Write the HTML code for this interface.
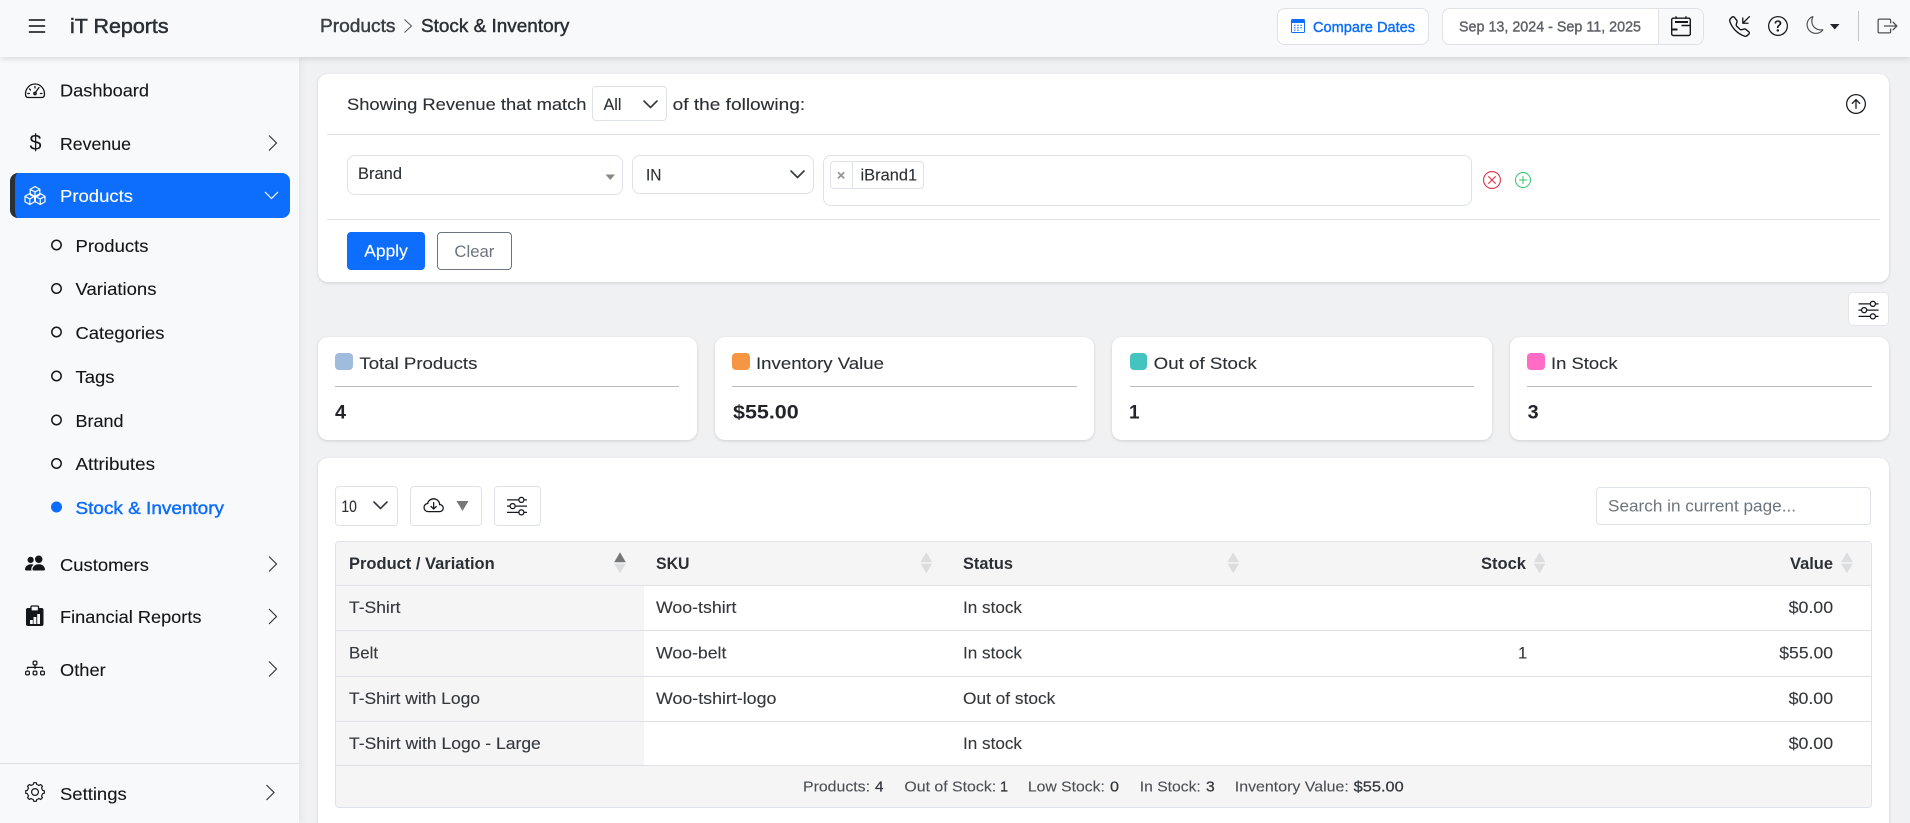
<!DOCTYPE html>
<html lang="en">
<head>
<meta charset="utf-8">
<title>iT Reports - Stock &amp; Inventory</title>
<style>
html,body{margin:0;padding:0;width:1910px;height:823px;overflow:hidden;background:#f0f1f3;font-family:"Liberation Sans",sans-serif}
#app{position:relative;width:1910px;height:823px;overflow:hidden;background:#f0f1f3}
.b{position:absolute;box-sizing:border-box}
.card{background:#fff;border-radius:10px;box-shadow:0 1px 3px rgba(0,0,0,.14)}
.ctl{background:#fff;border:1px solid #dee2e6;border-radius:4px}
.ctl8{background:#fff;border:1px solid #dee2e6;border-radius:8px}
.ln{background:#dee2e6;height:1px}
.ln2{background:#b9bbbe;height:1px}
.sq{border-radius:4px}
svg.o{position:absolute;left:0;top:0}
svg text{font-family:"Liberation Sans",sans-serif;font-size:16px;fill:#212529}
.s{font-size:17.5px;fill:#14171a;stroke:#14171a;stroke-width:.12}
.f{font-size:17px;fill:#2b3035;stroke:#2b3035;stroke-width:.12}
.td{font-size:16.5px;fill:#33383d;stroke:#33383d;stroke-width:.12}
.th{font-size:16.5px;font-weight:bold;fill:#2b3035}
.ft{font-size:14.5px;fill:#4a4f54;stroke:#4a4f54;stroke-width:.1}
.ftv{font-size:14.5px;fill:#33383d;stroke:#33383d;stroke-width:.25}
.val{font-size:19px;font-weight:bold;fill:#212529}
</style>
</head>
<body>
<div id="app">
<!-- layout backgrounds -->
<div class="b" style="left:0;top:57px;width:299px;height:766px;background:#f8f9fb;box-shadow:2px 0 6px rgba(0,0,0,.05)"></div>
<div class="b" style="left:0;top:0;width:1910px;height:57px;background:#f8f9fb;box-shadow:0 2px 6px rgba(0,0,0,.12)"></div>
<div class="b" style="left:0;top:763px;width:299px;height:1px;background:#dee2e6"></div>
<div class="b" style="left:10px;top:173px;width:280px;height:45px;background:#0d6efd;border-left:5px solid #2c3136;border-radius:8px"></div>

<!-- header controls -->
<div class="b ctl8" style="left:1277px;top:8px;width:152px;height:37px"></div>
<div class="b ctl8" style="left:1442px;top:8px;width:262px;height:37px"></div>
<div class="b" style="left:1658px;top:9px;width:45px;height:35px;background:#f8f9fb;border-left:1px solid #dee2e6;border-radius:0 7px 7px 0"></div>
<div class="b" style="left:1858px;top:11px;width:1px;height:30px;background:#c4c7ca"></div>

<!-- filter card -->
<div class="b card" style="left:318px;top:74px;width:1571px;height:208px"></div>
<div class="b ln" style="left:327px;top:134px;width:1553px"></div>
<div class="b ln" style="left:327px;top:219px;width:1553px"></div>
<div class="b ctl" style="left:592px;top:86px;width:75px;height:35px"></div>
<div class="b ctl8" style="left:347px;top:155px;width:276px;height:40px"></div>
<div class="b ctl8" style="left:632px;top:155px;width:182px;height:39px"></div>
<div class="b ctl8" style="left:823px;top:155px;width:649px;height:51px"></div>
<div class="b" style="left:830px;top:161px;width:94px;height:28px;background:#fff;border:1px solid #dee2e6;border-radius:4px"></div>
<div class="b" style="left:852px;top:162px;width:1px;height:26px;background:#dee2e6"></div>
<div class="b" style="left:347px;top:232px;width:78px;height:38px;background:#0d6efd;border-radius:4px"></div>
<div class="b" style="left:437px;top:232px;width:75px;height:38px;background:#fff;border:1px solid #6c757d;border-radius:4px"></div>

<!-- settings button -->
<div class="b" style="left:1848px;top:292px;width:41px;height:34px;background:#fff;border-radius:5px;border:1px solid #e4e6e9"></div>

<!-- summary cards -->
<div class="b card" style="left:318px;top:337px;width:379px;height:103px"></div>
<div class="b card" style="left:715px;top:337px;width:379px;height:103px"></div>
<div class="b card" style="left:1112px;top:337px;width:380px;height:103px"></div>
<div class="b card" style="left:1510px;top:337px;width:379px;height:103px"></div>
<div class="b sq" style="left:335px;top:353px;width:18px;height:17px;background:#a0bcdc"></div>
<div class="b sq" style="left:732px;top:353px;width:18px;height:17px;background:#f79642"></div>
<div class="b sq" style="left:1130px;top:353px;width:17px;height:17px;background:#45c3bf"></div>
<div class="b sq" style="left:1527px;top:353px;width:18px;height:17px;background:#ff6bc5"></div>
<div class="b ln2" style="left:335px;top:386px;width:344px"></div>
<div class="b ln2" style="left:732px;top:386px;width:345px"></div>
<div class="b ln2" style="left:1130px;top:386px;width:344px"></div>
<div class="b ln2" style="left:1527px;top:386px;width:345px"></div>

<!-- table card: runs past the bottom of the viewport, clipped by #app -->
<div class="b card" style="left:318px;top:458px;width:1571px;height:380px"></div>
<div class="b ctl" style="left:335px;top:486px;width:63px;height:40px"></div>
<div class="b ctl" style="left:410px;top:486px;width:72px;height:40px"></div>
<div class="b ctl" style="left:494px;top:486px;width:47px;height:40px"></div>
<div class="b ctl" style="left:1596px;top:487px;width:275px;height:38px"></div>

<div class="b" style="left:335px;top:541px;width:1537px;height:267px;border:1px solid #dee2e6;border-radius:4px;background:#fff;overflow:hidden">
  <div class="b" style="left:0;top:0;width:1535px;height:43px;background:#f5f5f6"></div>
  <div class="b" style="left:0;top:43px;width:308px;height:181px;background:#f5f5f6"></div>
  <div class="b" style="left:0;top:224px;width:1535px;height:41px;background:#f5f5f6"></div>
  <div class="b ln" style="left:0;top:43px;width:1535px"></div>
  <div class="b ln" style="left:0;top:88px;width:1535px"></div>
  <div class="b ln" style="left:0;top:134px;width:1535px"></div>
  <div class="b ln" style="left:0;top:179px;width:1535px"></div>
  <div class="b ln" style="left:0;top:223px;width:1535px"></div>
</div>

<svg class="o" width="1910" height="823" viewBox="0 0 1910 823" xmlns="http://www.w3.org/2000/svg">
  <!-- ===== header ===== -->
  <svg x="25" y="14" width="24" height="24" viewBox="0 0 16 16" fill="#212529" stroke="#212529" stroke-width=".12"><path d="M2.5 12a.5.5 0 0 1 .5-.5h10a.5.5 0 0 1 0 1H3a.5.5 0 0 1-.5-.5m0-4a.5.5 0 0 1 .5-.5h10a.5.5 0 0 1 0 1H3a.5.5 0 0 1-.5-.5m0-4a.5.5 0 0 1 .5-.5h10a.5.5 0 0 1 0 1H3a.5.5 0 0 1-.5-.5"/></svg>
  <text x="70" y="33" textLength="98.6" lengthAdjust="spacingAndGlyphs" style="font-size:20.5px;fill:#2b3035;stroke:#2b3035;stroke-width:.5">iT Reports</text>
  <text x="320" y="32" textLength="75.5" lengthAdjust="spacingAndGlyphs" style="font-size:18px;fill:#3a3f44;stroke:#3a3f44;stroke-width:.45">Products</text>
  <path d="M404.5 19.5 L411.5 26 L404.5 32.5" fill="none" stroke="#555" stroke-width="1"/>
  <text x="421" y="32" textLength="148.4" lengthAdjust="spacingAndGlyphs" style="font-size:18px;fill:#2b3035;stroke:#2b3035;stroke-width:.45">Stock &amp; Inventory</text>

  <!-- compare calendar icon -->
  <g fill="none" stroke="#0d6efd">
    <rect x="1291.5" y="19.5" width="13" height="13" rx="1" stroke-width="1"/>
    <path d="M1291 21.5h14" stroke-width="3"/>
    <path d="M1294 25.3h1.5M1297.2 25.3h1.5M1300.4 25.3h1.5M1294 27.8h1.5M1297.2 27.8h1.5M1300.4 27.8h1.5M1294 30.2h1.5M1297.2 30.2h1.5" stroke-width="1.2"/>
  </g>
  <text x="1313" y="32" textLength="102" lengthAdjust="spacingAndGlyphs" style="font-size:14.5px;fill:#0d6efd;stroke:#0d6efd;stroke-width:.4">Compare Dates</text>
  <text x="1459" y="31.5" textLength="182" lengthAdjust="spacingAndGlyphs" style="font-size:14.5px;fill:#5f6368;stroke:#5f6368;stroke-width:.4">Sep 13, 2024 - Sep 11, 2025</text>

  <!-- date calendar icon -->
  <g fill="none" stroke="#16191c">
    <rect x="1671.7" y="18.2" width="18.6" height="17.3" rx="1.5" stroke-width="1.4"/>
    <path d="M1676 16.2v2.5M1686 16.2v2.5" stroke-width="1.4"/>
    <path d="M1675 22h13" stroke-width="2"/>
    <path d="M1681.5 25.5h9" stroke-width="1.5"/>
    <path d="M1672 29.5h5.5" stroke-width="2"/>
  </g>

  <!-- phone -->
  <svg x="1729" y="16" width="21" height="21" viewBox="0 0 16 16" fill="#16191c"><path d="M15.854.146a.5.5 0 0 1 0 .708L11.707 5H14.5a.5.5 0 0 1 0 1h-4a.5.5 0 0 1-.5-.5v-4a.5.5 0 0 1 1 0v2.793L15.146.146a.5.5 0 0 1 .708 0m-12.2 1.182a.68.68 0 0 0-1.015-.063L1.605 2.3c-.483.484-.661 1.169-.45 1.77a17.6 17.6 0 0 0 4.168 6.608 17.6 17.6 0 0 0 6.608 4.168c.601.211 1.286.033 1.77-.45l1.034-1.034a.68.68 0 0 0-.063-1.015l-2.307-1.794a.68.68 0 0 0-.58-.122l-2.19.547a1.75 1.75 0 0 1-1.657-.459L5.482 8.062a1.75 1.75 0 0 1-.46-1.657l.548-2.19a.68.68 0 0 0-.122-.58zM1.884.511a1.745 1.745 0 0 1 2.612.163L6.29 2.98c.329.423.445.974.315 1.494l-.547 2.19a.68.68 0 0 0 .178.643l2.457 2.457a.68.68 0 0 0 .644.178l2.189-.547a1.75 1.75 0 0 1 1.494.315l2.306 1.794c.829.645.905 1.87.163 2.611l-1.034 1.034c-.74.74-1.846 1.065-2.877.702a18.6 18.6 0 0 1-7.01-4.42 18.6 18.6 0 0 1-4.42-7.009c-.362-1.03-.037-2.137.703-2.877z"/></svg>
  <!-- help -->
  <svg x="1768" y="16" width="20" height="20" viewBox="0 0 16 16" fill="#16191c"><path d="M8 15A7 7 0 1 1 8 1a7 7 0 0 1 0 14m0 1A8 8 0 1 0 8 0a8 8 0 0 0 0 16"/><path d="M5.255 5.786a.237.237 0 0 0 .241.247h.825c.138 0 .248-.113.266-.25.09-.656.54-1.134 1.342-1.134.686 0 1.314.343 1.314 1.168 0 .635-.374.927-.965 1.371-.673.489-1.206 1.06-1.168 1.987l.003.217a.25.25 0 0 0 .25.246h.811a.25.25 0 0 0 .25-.25v-.105c0-.718.273-.927 1.01-1.486.609-.463 1.244-.977 1.244-2.056 0-1.511-1.276-2.241-2.673-2.241-1.267 0-2.655.59-2.75 2.286m1.557 5.763c0 .533.425.927 1.01.927.609 0 1.028-.394 1.028-.927 0-.552-.42-.94-1.029-.94-.584 0-1.009.388-1.009.94"/></svg>
  <!-- moon -->
  <svg x="1806.5" y="16" width="18" height="18" viewBox="0 0 16 16" fill="#4a4f54"><path d="M6 .278a.77.77 0 0 1 .08.858 7.2 7.2 0 0 0-.878 3.46c0 4.021 3.278 7.277 7.318 7.277q.792-.001 1.533-.16a.79.79 0 0 1 .81.316.73.73 0 0 1-.031.893A8.35 8.35 0 0 1 8.344 16C3.734 16 0 12.286 0 7.71 0 4.266 2.114 1.312 5.124.06A.75.75 0 0 1 6 .278M4.858 1.311A7.27 7.27 0 0 0 1.025 7.71c0 4.02 3.279 7.276 7.319 7.276a7.32 7.32 0 0 0 5.205-2.162q-.506.063-1.029.063c-4.61 0-8.343-3.714-8.343-8.29 0-1.167.242-2.278.681-3.286"/></svg>
  <path d="M1830 24h9.5l-4.75 5.5z" fill="#212529"/>
  <!-- logout -->
  <svg x="1877.5" y="16" width="20" height="20" viewBox="0 0 16 16" fill="#4a4f54"><path d="M10 12.5a.5.5 0 0 1-.5.5h-8a.5.5 0 0 1-.5-.5v-9a.5.5 0 0 1 .5-.5h8a.5.5 0 0 1 .5.5v2a.5.5 0 0 0 1 0v-2A1.5 1.5 0 0 0 9.5 2h-8A1.5 1.5 0 0 0 0 3.5v9A1.5 1.5 0 0 0 1.5 14h8a1.5 1.5 0 0 0 1.5-1.5v-2a.5.5 0 0 0-1 0z"/><path d="M15.854 8.354a.5.5 0 0 0 0-.708l-3-3a.5.5 0 0 0-.708.708L14.293 7.5H5.5a.5.5 0 0 0 0 1h8.793l-2.147 2.146a.5.5 0 0 0 .708.708z"/></svg>

  <!-- ===== sidebar ===== -->
  <!-- speedometer -->
  <g fill="none" stroke="#14171a" stroke-width="1.3" stroke-linecap="round">
    <path d="M28 97.5 H42 Q44.5 97.5 44.5 94 A 9.5 10 0 0 0 25.5 94 Q25.5 97.5 28 97.5Z"/>
    <path d="M35 93 L39 87.5"/>
    <path d="M35 86.5v1.5M29.5 89l1 1M27.8 93.5h1.5M40.5 93.5h1.5"/>
    <circle cx="35" cy="93.5" r="1.2"/>
  </g>
  <text x="60" y="96.5" textLength="89" lengthAdjust="spacingAndGlyphs" class="s">Dashboard</text>

  <text x="29.5" y="150" textLength="12" lengthAdjust="spacingAndGlyphs" style="font-size:22px;fill:#14171a">$</text>
  <text x="60" y="150" textLength="71" lengthAdjust="spacingAndGlyphs" class="s">Revenue</text>
  <path d="M269 135.5 L276.5 143 L269 150.5" fill="none" stroke="#33383d" stroke-width="1.2"/>

  <g fill="none" stroke="#fff" stroke-width="1.2" stroke-linejoin="round">
    <path d="M35 186.5 L39.8 189.25 V194.75 L35 197.5 L30.2 194.75 V189.25Z M30.2 189.25 L35 192 L39.8 189.25 M35 192V197.5"/>
    <path d="M29.8 193.5 L34.6 196.25 V201.75 L29.8 204.5 L25 201.75 V196.25 Z M25 196.25 L29.8 199 L34.6 196.25 M29.8 199V204.5"/>
    <path d="M40.2 193.5 L45 196.25 V201.75 L40.2 204.5 L35.4 201.75 V196.25 Z M35.4 196.25 L40.2 199 L45 196.25 M40.2 199 V204.5"/>
  </g>
  <text x="60" y="202" textLength="73" lengthAdjust="spacingAndGlyphs" class="s" style="fill:#fff;stroke:#fff">Products</text>
  <path d="M265 192 L271.5 198.5 L278 192" fill="none" stroke="#fff" stroke-width="1.2"/>

  <g fill="none" stroke="#14171a" stroke-width="1.5">
    <circle cx="56.5" cy="245" r="4.7"/>
    <circle cx="56.5" cy="288.5" r="4.7"/>
    <circle cx="56.5" cy="332" r="4.7"/>
    <circle cx="56.5" cy="376" r="4.7"/>
    <circle cx="56.5" cy="420" r="4.7"/>
    <circle cx="56.5" cy="463.5" r="4.7"/>
  </g>
  <circle cx="56.5" cy="507" r="5.5" fill="#0d6efd"/>
  <text x="75.5" y="252" textLength="73" lengthAdjust="spacingAndGlyphs" class="s">Products</text>
  <text x="75.5" y="295" textLength="81" lengthAdjust="spacingAndGlyphs" class="s">Variations</text>
  <text x="75.5" y="339" textLength="89" lengthAdjust="spacingAndGlyphs" class="s">Categories</text>
  <text x="75.5" y="383" textLength="39" lengthAdjust="spacingAndGlyphs" class="s">Tags</text>
  <text x="75.5" y="427" textLength="48" lengthAdjust="spacingAndGlyphs" class="s">Brand</text>
  <text x="75.5" y="470" textLength="79.5" lengthAdjust="spacingAndGlyphs" class="s">Attributes</text>
  <text x="75.5" y="514" textLength="148.5" lengthAdjust="spacingAndGlyphs" class="s" style="fill:#0d6efd;stroke:#0d6efd;stroke-width:.45">Stock &amp; Inventory</text>

  <svg x="25" y="553" width="20" height="20" viewBox="0 0 16 16" fill="#14171a"><path d="M7 14s-1 0-1-1 1-4 5-4 5 3 5 4-1 1-1 1zm4-6a3 3 0 1 0 0-6 3 3 0 0 0 0 6m-5.784 6A2.24 2.24 0 0 1 5 13c0-1.355.68-2.75 1.936-3.72A6.3 6.3 0 0 0 5 9c-4 0-5 3-5 4s1 1 1 1zM4.5 8a2.5 2.5 0 1 0 0-5 2.5 2.5 0 0 0 0 5"/></svg>
  <text x="60" y="571" textLength="89" lengthAdjust="spacingAndGlyphs" class="s">Customers</text>
  <path d="M269 556.5 L276.5 564 L269 571.5" fill="none" stroke="#33383d" stroke-width="1.2"/>

  <rect x="26" y="608" width="17.5" height="18" rx="2" fill="#14171a"/>
  <rect x="31" y="606" width="7.5" height="5" rx="1" fill="#f8f9fb" stroke="#14171a" stroke-width="1.3"/>
  <path d="M30 620h2.8v4H30zM33.5 617h2.8v7h-2.8zM37.2 614H40v10h-2.8z" fill="#f8f9fb"/>
  <text x="60" y="623" textLength="141.5" lengthAdjust="spacingAndGlyphs" class="s">Financial Reports</text>
  <path d="M269 609 L276.5 616.5 L269 624" fill="none" stroke="#33383d" stroke-width="1.2"/>

  <svg x="25" y="658" width="20" height="20" viewBox="0 0 16 16" fill="#14171a"><path fill-rule="evenodd" d="M6 3.5A1.5 1.5 0 0 1 7.5 2h1A1.5 1.5 0 0 1 10 3.5v1A1.5 1.5 0 0 1 8.5 6v1H14a.5.5 0 0 1 .5.5v1a.5.5 0 0 1-1 0V8h-5v.5a.5.5 0 0 1-1 0V8h-5v.5a.5.5 0 0 1-1 0v-1A.5.5 0 0 1 2 7h5.5V6A1.5 1.5 0 0 1 6 4.5zM8.5 5a.5.5 0 0 0 .5-.5v-1a.5.5 0 0 0-.5-.5h-1a.5.5 0 0 0-.5.5v1a.5.5 0 0 0 .5.5zM0 11.5A1.5 1.5 0 0 1 1.5 10h1A1.5 1.5 0 0 1 4 11.5v1A1.5 1.5 0 0 1 2.5 14h-1A1.5 1.5 0 0 1 0 12.5zm1.5-.5a.5.5 0 0 0-.5.5v1a.5.5 0 0 0 .5.5h1a.5.5 0 0 0 .5-.5v-1a.5.5 0 0 0-.5-.5zm4.5.5A1.5 1.5 0 0 1 7.5 10h1a1.5 1.5 0 0 1 1.5 1.5v1A1.5 1.5 0 0 1 8.5 14h-1A1.5 1.5 0 0 1 6 12.5zm1.5-.5a.5.5 0 0 0-.5.5v1a.5.5 0 0 0 .5.5h1a.5.5 0 0 0 .5-.5v-1a.5.5 0 0 0-.5-.5zm4.5.5a1.5 1.5 0 0 1 1.5-1.5h1a1.5 1.5 0 0 1 1.5 1.5v1a1.5 1.5 0 0 1-1.5 1.5h-1a1.5 1.5 0 0 1-1.5-1.5zm1.5-.5a.5.5 0 0 0-.5.5v1a.5.5 0 0 0 .5.5h1a.5.5 0 0 0 .5-.5v-1a.5.5 0 0 0-.5-.5z"/></svg>
  <text x="60" y="676" textLength="45.7" lengthAdjust="spacingAndGlyphs" class="s">Other</text>
  <path d="M269 661.5 L276.5 669 L269 676.5" fill="none" stroke="#33383d" stroke-width="1.2"/>

  <!-- gear -->
  <g transform="translate(35 792)" fill="none" stroke="#14171a" stroke-width="1.2" stroke-linejoin="round">
    <circle r="3.4"/>
    <path d="M-2.9 -7 L-1.7 -7.6 L-1.3 -9.3 H1.3 L1.7 -7.6 L2.9 -7"/>
    <path d="M-2.9 -7 L-1.7 -7.6 L-1.3 -9.3 H1.3 L1.7 -7.6 L2.9 -7" transform="rotate(45)"/>
    <path d="M-2.9 -7 L-1.7 -7.6 L-1.3 -9.3 H1.3 L1.7 -7.6 L2.9 -7" transform="rotate(90)"/>
    <path d="M-2.9 -7 L-1.7 -7.6 L-1.3 -9.3 H1.3 L1.7 -7.6 L2.9 -7" transform="rotate(135)"/>
    <path d="M-2.9 -7 L-1.7 -7.6 L-1.3 -9.3 H1.3 L1.7 -7.6 L2.9 -7" transform="rotate(180)"/>
    <path d="M-2.9 -7 L-1.7 -7.6 L-1.3 -9.3 H1.3 L1.7 -7.6 L2.9 -7" transform="rotate(225)"/>
    <path d="M-2.9 -7 L-1.7 -7.6 L-1.3 -9.3 H1.3 L1.7 -7.6 L2.9 -7" transform="rotate(270)"/>
    <path d="M-2.9 -7 L-1.7 -7.6 L-1.3 -9.3 H1.3 L1.7 -7.6 L2.9 -7" transform="rotate(315)"/>
  </g>
  <text x="60" y="800" textLength="66.7" lengthAdjust="spacingAndGlyphs" class="s">Settings</text>
  <path d="M266.5 785 L274 792.5 L266.5 800" fill="none" stroke="#33383d" stroke-width="1.2"/>

  <!-- ===== filter card ===== -->
  <text x="347" y="110" textLength="239.5" lengthAdjust="spacingAndGlyphs" class="f">Showing Revenue that match</text>
  <text x="603.5" y="110" textLength="18" lengthAdjust="spacingAndGlyphs" class="f">All</text>
  <path d="M644 101 L650.5 107.5 L657 101" fill="none" stroke="#343a40" stroke-width="1.6" stroke-linecap="round" stroke-linejoin="round"/>
  <text x="672.7" y="110" textLength="132.5" lengthAdjust="spacingAndGlyphs" class="f">of the following:</text>
  <svg x="1846" y="94" width="20" height="20" viewBox="0 0 16 16" fill="#16191c"><path d="M1 8a7 7 0 1 0 14 0A7 7 0 0 0 1 8m15 0A8 8 0 1 1 0 8a8 8 0 0 1 16 0m-7.5 3.5a.5.5 0 0 1-1 0V5.707L5.354 7.854a.5.5 0 1 1-.708-.708l3-3a.5.5 0 0 1 .708 0l3 3a.5.5 0 0 1-.708.708L8.5 5.707z"/></svg>

  <text x="358" y="179" textLength="44" lengthAdjust="spacingAndGlyphs" class="f">Brand</text>
  <path d="M605.5 174.5h9.5l-4.75 5.5z" fill="#888"/>
  <text x="646" y="180.5" textLength="15.5" lengthAdjust="spacingAndGlyphs" class="f">IN</text>
  <path d="M791 171 L797.5 177.5 L804 171" fill="none" stroke="#343a40" stroke-width="1.6" stroke-linecap="round" stroke-linejoin="round"/>
  <path d="M838 172.2l6.2 6.2M844.2 172.2l-6.2 6.2" stroke="#909498" stroke-width="1.7" fill="none"/>
  <text x="860.5" y="180.5" textLength="56.6" lengthAdjust="spacingAndGlyphs" class="f">iBrand1</text>
  <svg x="1483" y="171" width="18" height="18" viewBox="0 0 16 16" fill="#dc3545"><path d="M8 15A7 7 0 1 1 8 1a7 7 0 0 1 0 14m0 1A8 8 0 1 0 8 0a8 8 0 0 0 0 16"/><path d="M4.646 4.646a.5.5 0 0 1 .708 0L8 7.293l2.646-2.647a.5.5 0 0 1 .708.708L8.707 8l2.647 2.646a.5.5 0 0 1-.708.708L8 8.707l-2.646 2.647a.5.5 0 0 1-.708-.708L7.293 8 4.646 5.354a.5.5 0 0 1 0-.708"/></svg>
  <svg x="1515" y="172" width="16" height="16" viewBox="0 0 16 16" fill="#2fc46a"><path d="M8 15A7 7 0 1 1 8 1a7 7 0 0 1 0 14m0 1A8 8 0 1 0 8 0a8 8 0 0 0 0 16"/><path d="M8 4a.5.5 0 0 1 .5.5v3h3a.5.5 0 0 1 0 1h-3v3a.5.5 0 0 1-1 0v-3h-3a.5.5 0 0 1 0-1h3v-3A.5.5 0 0 1 8 4"/></svg>

  <text x="364.3" y="256.5" textLength="43.5" lengthAdjust="spacingAndGlyphs" style="font-size:16.5px;fill:#fff;stroke:#fff;stroke-width:.15">Apply</text>
  <text x="454.4" y="257" textLength="40" lengthAdjust="spacingAndGlyphs" style="font-size:16.5px;fill:#6c757d">Clear</text>

  <svg x="1858.5" y="299.5" width="20" height="20" viewBox="0 0 16 16" fill="#16191c"><path fill-rule="evenodd" d="M11.5 2a1.5 1.5 0 1 0 0 3 1.5 1.5 0 0 0 0-3M9.05 3a2.5 2.5 0 0 1 4.9 0H16v1h-2.05a2.5 2.5 0 0 1-4.9 0H0V3zM4.5 7a1.5 1.5 0 1 0 0 3 1.5 1.5 0 0 0 0-3M2.05 8a2.5 2.5 0 0 1 4.9 0H16v1H6.95a2.5 2.5 0 0 1-4.9 0H0V8zm9.45 4a1.5 1.5 0 1 0 0 3 1.5 1.5 0 0 0 0-3m-2.45 1a2.5 2.5 0 0 1 4.9 0H16v1h-2.05a2.5 2.5 0 0 1-4.9 0H0v-1z"/></svg>

  <!-- ===== summary cards ===== -->
  <text x="359.4" y="369" textLength="118" lengthAdjust="spacingAndGlyphs" class="f">Total Products</text>
  <text x="756" y="369" textLength="128" lengthAdjust="spacingAndGlyphs" class="f">Inventory Value</text>
  <text x="1153.7" y="369" textLength="103" lengthAdjust="spacingAndGlyphs" class="f">Out of Stock</text>
  <text x="1551" y="369" textLength="66.6" lengthAdjust="spacingAndGlyphs" class="f">In Stock</text>
  <text x="335" y="418.7" textLength="11" lengthAdjust="spacingAndGlyphs" class="val">4</text>
  <text x="733" y="418.7" textLength="65.7" lengthAdjust="spacingAndGlyphs" class="val">$55.00</text>
  <text x="1129" y="418.7" class="val">1</text>
  <text x="1527.7" y="418.7" textLength="11" lengthAdjust="spacingAndGlyphs" class="val">3</text>

  <!-- ===== table toolbar ===== -->
  <text x="341.4" y="512" textLength="15.5" lengthAdjust="spacingAndGlyphs" class="f">10</text>
  <path d="M374 502 L380.5 508.5 L387 502" fill="none" stroke="#343a40" stroke-width="1.6" stroke-linecap="round" stroke-linejoin="round"/>
  <svg x="423.4" y="495.6" width="20.5" height="20.5" viewBox="0 0 16 16" fill="#16191c"><path d="M7.646 10.854a.5.5 0 0 0 .708 0l2-2a.5.5 0 0 0-.708-.708L8.5 9.293V5.5a.5.5 0 0 0-1 0v3.793L6.354 8.146a.5.5 0 1 0-.708.708z"/><path d="M4.406 3.342A5.53 5.53 0 0 1 8 2c2.69 0 4.923 2 5.166 4.579C14.758 6.804 16 8.137 16 9.773 16 11.569 14.502 13 12.687 13H3.781C1.708 13 0 11.366 0 9.318c0-1.763 1.266-3.223 2.942-3.593.143-.863.698-1.723 1.464-2.383m.653.757c-.757.653-1.153 1.44-1.153 2.056v.448l-.445.049C2.064 6.805 1 7.952 1 9.318 1 10.785 2.23 12 3.781 12h8.906C13.98 12 15 10.988 15 9.773c0-1.216-1.02-2.228-2.313-2.228h-.5v-.5C12.188 4.825 10.328 3 8 3a4.53 4.53 0 0 0-2.941 1.1z"/></svg>
  <path d="M456.5 501h12l-6 10z" fill="#777"/>
  <svg x="507" y="495.5" width="20" height="20" viewBox="0 0 16 16" fill="#16191c"><path fill-rule="evenodd" d="M11.5 2a1.5 1.5 0 1 0 0 3 1.5 1.5 0 0 0 0-3M9.05 3a2.5 2.5 0 0 1 4.9 0H16v1h-2.05a2.5 2.5 0 0 1-4.9 0H0V3zM4.5 7a1.5 1.5 0 1 0 0 3 1.5 1.5 0 0 0 0-3M2.05 8a2.5 2.5 0 0 1 4.9 0H16v1H6.95a2.5 2.5 0 0 1-4.9 0H0V8zm9.45 4a1.5 1.5 0 1 0 0 3 1.5 1.5 0 0 0 0-3m-2.45 1a2.5 2.5 0 0 1 4.9 0H16v1h-2.05a2.5 2.5 0 0 1-4.9 0H0v-1z"/></svg>
  <text x="1608" y="511.5" textLength="188" lengthAdjust="spacingAndGlyphs" style="font-size:16.5px;fill:#6c757d">Search in current page...</text>

  <!-- ===== table head ===== -->
  <text x="349" y="569" textLength="145.7" lengthAdjust="spacingAndGlyphs" class="th">Product / Variation</text>
  <text x="656" y="569" textLength="33.5" lengthAdjust="spacingAndGlyphs" class="th">SKU</text>
  <text x="963" y="569" textLength="50" lengthAdjust="spacingAndGlyphs" class="th">Status</text>
  <text x="1481" y="569" textLength="45" lengthAdjust="spacingAndGlyphs" class="th">Stock</text>
  <text x="1790" y="569" textLength="43" lengthAdjust="spacingAndGlyphs" class="th">Value</text>
  <path d="M620 552.3l5.8 10h-11.6z" fill="#777"/><path d="M620 573.3l5.8-9.5h-11.6z" fill="#dcdddf"/>
  <path d="M926.3 552.3l5.8 10h-11.6z" fill="#dcdddf"/><path d="M926.3 573.3l5.8-9.5h-11.6z" fill="#dcdddf"/>
  <path d="M1233.3 552.3l5.8 10h-11.6z" fill="#dcdddf"/><path d="M1233.3 573.3l5.8-9.5h-11.6z" fill="#dcdddf"/>
  <path d="M1539.6 552.3l5.8 10h-11.6z" fill="#dcdddf"/><path d="M1539.6 573.3l5.8-9.5h-11.6z" fill="#dcdddf"/>
  <path d="M1847 552.3l5.8 10h-11.6z" fill="#dcdddf"/><path d="M1847 573.3l5.8-9.5h-11.6z" fill="#dcdddf"/>

  <!-- rows -->
  <text x="349" y="613" textLength="51.5" lengthAdjust="spacingAndGlyphs" class="td">T-Shirt</text>
  <text x="656" y="613" textLength="80.5" lengthAdjust="spacingAndGlyphs" class="td">Woo-tshirt</text>
  <text x="963" y="613" textLength="59" lengthAdjust="spacingAndGlyphs" class="td">In stock</text>
  <text x="1788.6" y="613" textLength="44.5" lengthAdjust="spacingAndGlyphs" class="td">$0.00</text>

  <text x="349" y="658.5" textLength="29" lengthAdjust="spacingAndGlyphs" class="td">Belt</text>
  <text x="656" y="658.5" textLength="70.4" lengthAdjust="spacingAndGlyphs" class="td">Woo-belt</text>
  <text x="963" y="658.5" textLength="59" lengthAdjust="spacingAndGlyphs" class="td">In stock</text>
  <text x="1518" y="658.5" class="td">1</text>
  <text x="1779.3" y="658.5" textLength="53.7" lengthAdjust="spacingAndGlyphs" class="td">$55.00</text>

  <text x="349" y="704" textLength="131" lengthAdjust="spacingAndGlyphs" class="td">T-Shirt with Logo</text>
  <text x="656" y="704" textLength="120.4" lengthAdjust="spacingAndGlyphs" class="td">Woo-tshirt-logo</text>
  <text x="963" y="704" textLength="92.3" lengthAdjust="spacingAndGlyphs" class="td">Out of stock</text>
  <text x="1788.6" y="704" textLength="44.5" lengthAdjust="spacingAndGlyphs" class="td">$0.00</text>

  <text x="349" y="749" textLength="191.8" lengthAdjust="spacingAndGlyphs" class="td">T-Shirt with Logo - Large</text>
  <text x="963" y="749" textLength="59" lengthAdjust="spacingAndGlyphs" class="td">In stock</text>
  <text x="1788.6" y="749" textLength="44.5" lengthAdjust="spacingAndGlyphs" class="td">$0.00</text>

  <!-- footer -->
  <text x="803" y="791.5" textLength="67" lengthAdjust="spacingAndGlyphs" class="ft">Products:</text>
  <text x="875" y="791.5" textLength="8.5" lengthAdjust="spacingAndGlyphs" class="ftv">4</text>
  <text x="904.4" y="791.5" textLength="91.8" lengthAdjust="spacingAndGlyphs" class="ft">Out of Stock:</text>
  <text x="1000" y="791.5" class="ftv">1</text>
  <text x="1027.9" y="791.5" textLength="77" lengthAdjust="spacingAndGlyphs" class="ft">Low Stock:</text>
  <text x="1110" y="791.5" textLength="9" lengthAdjust="spacingAndGlyphs" class="ftv">0</text>
  <text x="1139.8" y="791.5" textLength="61" lengthAdjust="spacingAndGlyphs" class="ft">In Stock:</text>
  <text x="1206" y="791.5" textLength="8.7" lengthAdjust="spacingAndGlyphs" class="ftv">3</text>
  <text x="1234.8" y="791.5" textLength="114" lengthAdjust="spacingAndGlyphs" class="ft">Inventory Value:</text>
  <text x="1353.7" y="791.5" textLength="50" lengthAdjust="spacingAndGlyphs" class="ftv">$55.00</text>
</svg>
</div>
</body>
</html>
